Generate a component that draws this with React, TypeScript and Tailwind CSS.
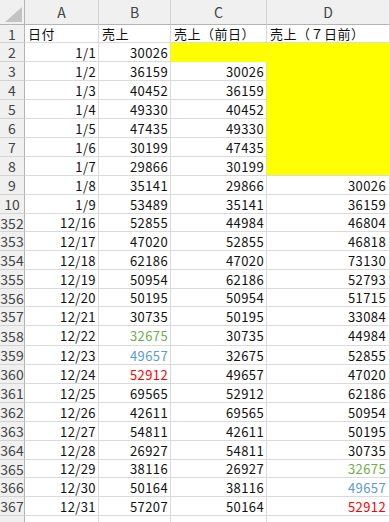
const GREEN = 'text-[#70ad47]';
const BLUE = 'text-[#5b9bd5]';
const RED = 'text-[#ff0000]';
const INK = 'text-[#111]';

interface Row {
  n: string;
  h: string;
  a: string;
  b: string;
  c: string;
  d: string;
  bTone?: string;
  dTone?: string;
  cFill?: boolean;
  dFill?: boolean;
  dFillBottom?: boolean;
}

const rows: Row[] = [
  { n: '2', h: 'h-[19px]', a: '1/1', b: '30026', c: '', d: '', cFill: true, dFill: true },
  { n: '3', h: 'h-[19px]', a: '1/2', b: '36159', c: '30026', d: '', dFill: true },
  { n: '4', h: 'h-[19px]', a: '1/3', b: '40452', c: '36159', d: '', dFill: true },
  { n: '5', h: 'h-[19px]', a: '1/4', b: '49330', c: '40452', d: '', dFill: true },
  { n: '6', h: 'h-[19px]', a: '1/5', b: '47435', c: '49330', d: '', dFill: true },
  { n: '7', h: 'h-[19px]', a: '1/6', b: '30199', c: '47435', d: '', dFill: true },
  { n: '8', h: 'h-[19px]', a: '1/7', b: '29866', c: '30199', d: '', dFill: true, dFillBottom: true },
  { n: '9', h: 'h-[19px]', a: '1/8', b: '35141', c: '29866', d: '30026' },
  { n: '10', h: 'h-[19px]', a: '1/9', b: '53489', c: '35141', d: '36159' },
  { n: '352', h: 'h-[18px]', a: '12/16', b: '52855', c: '44984', d: '46804' },
  { n: '353', h: 'h-[19px]', a: '12/17', b: '47020', c: '52855', d: '46818' },
  { n: '354', h: 'h-[19px]', a: '12/18', b: '62186', c: '47020', d: '73130' },
  { n: '355', h: 'h-[19px]', a: '12/19', b: '50954', c: '62186', d: '52793' },
  { n: '356', h: 'h-[18px]', a: '12/20', b: '50195', c: '50954', d: '51715' },
  { n: '357', h: 'h-[19px]', a: '12/21', b: '30735', c: '50195', d: '33084' },
  { n: '358', h: 'h-[20px]', a: '12/22', b: '32675', c: '30735', d: '44984', bTone: GREEN },
  { n: '359', h: 'h-[19px]', a: '12/23', b: '49657', c: '32675', d: '52855', bTone: BLUE },
  { n: '360', h: 'h-[19px]', a: '12/24', b: '52912', c: '49657', d: '47020', bTone: RED },
  { n: '361', h: 'h-[19px]', a: '12/25', b: '69565', c: '52912', d: '62186' },
  { n: '362', h: 'h-[19px]', a: '12/26', b: '42611', c: '69565', d: '50954' },
  { n: '363', h: 'h-[19px]', a: '12/27', b: '54811', c: '42611', d: '50195' },
  { n: '364', h: 'h-[19px]', a: '12/28', b: '26927', c: '54811', d: '30735' },
  { n: '365', h: 'h-[18px]', a: '12/29', b: '38116', c: '26927', d: '32675', dTone: GREEN },
  { n: '366', h: 'h-[19px]', a: '12/30', b: '50164', c: '38116', d: '49657', dTone: BLUE },
  { n: '367', h: 'h-[19px]', a: '12/31', b: '57207', c: '50164', d: '52912', dTone: RED },
];

const grid = 'grid grid-cols-[25px_74px_72px_96px_123px]';
const cell = 'flex items-center overflow-hidden whitespace-nowrap border-r border-b border-[#dadada]';
const num = 'justify-end pr-[2px] text-[13px] tracking-[0.4px] leading-none';
const label = 'pl-[3px] text-[13px] tracking-[0.5px] leading-none text-[#111]';
const rowHead =
  'flex items-center justify-center overflow-hidden whitespace-nowrap bg-[#f0f0f0] border-r border-r-[#b4b4b4] border-b border-b-[#d4d4d4] text-[14px] leading-none text-[#444]';

function CornerCell() {
  return (
    <div className="h-[25px] bg-[#f0f0f0] border-r border-b border-[#b4b4b4] flex">
      <svg width="24" height="24" viewBox="0 0 24 24" className="block">
        <polygon points="22,7 22,22 5,22" fill="#c3c3c3" />
      </svg>
    </div>
  );
}

function ColHead({ label }: { label: string }) {
  return (
    <div className="h-[25px] flex items-center justify-center bg-[#f0f0f0] border-r border-r-[#d4d4d4] border-b border-b-[#b4b4b4] text-[14px] leading-none text-[#444]">
      {label}
    </div>
  );
}

function DataRow({ row }: { row: Row }) {
  return (
    <div className={`${grid} ${row.h}`}>
      <div className={rowHead}>{row.n}</div>
      <div className={`${cell} ${num} ${INK}`}>{row.a}</div>
      <div className={`${cell} ${num} ${row.bTone ?? INK}`}>{row.b}</div>
      <div className={`${cell} ${num} ${INK} ${row.cFill ? 'bg-[#ffff00] border-[#ffff00]' : ''}`}>{row.c}</div>
      <div
        className={`${cell} ${num} pr-[3px] ${row.dTone ?? INK} ${
          row.dFill ? 'bg-[#ffff00] border-r-[#ffff00]' : ''
        } ${row.dFill && !row.dFillBottom ? 'border-b-[#ffff00]' : ''}`}
      >
        {row.d}
      </div>
    </div>
  );
}

export default function App() {
  return (
    <div className="w-[390px] h-[522px] overflow-hidden bg-white font-['Noto_Sans_CJK_JP','Noto_Sans',sans-serif]">
      <div className={grid}>
        <CornerCell />
        <ColHead label="A" />
        <ColHead label="B" />
        <ColHead label="C" />
        <ColHead label="D" />
      </div>

      {/* row 1: column titles */}
      <div className={`${grid} h-[18px]`}>
        <div className={rowHead}>1</div>
        <div className={`${cell} ${label}`}>日付</div>
        <div className={`${cell} ${label}`}>売上</div>
        <div className={`${cell} ${label}`}>売上（前日）</div>
        <div className={`${cell} ${label} pl-[2px]`}>売上（７日前）</div>
      </div>

      {rows.map((row) => (
        <DataRow key={row.n} row={row} />
      ))}

      <div className={`${grid} h-[19px]`}>
        <div className={rowHead} />
        <div className={cell} />
        <div className={cell} />
        <div className={cell} />
        <div className={cell} />
      </div>
    </div>
  );
}
